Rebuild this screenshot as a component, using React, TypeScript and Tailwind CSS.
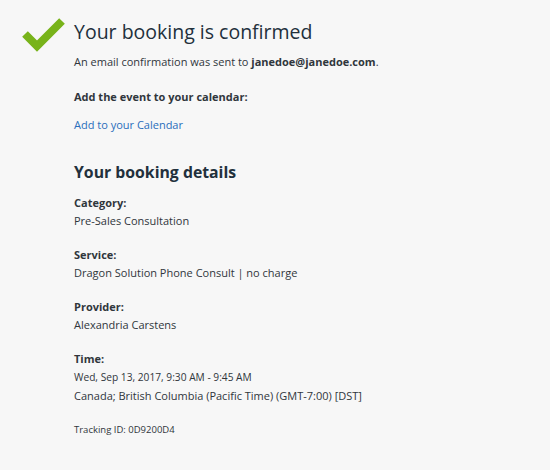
export default function App() {
  const details = [
    { label: "Category:", value: "Pre-Sales Consultation" },
    { label: "Service:", value: "Dragon Solution Phone Consult | no charge" },
    { label: "Provider:", value: "Alexandria Carstens" },
  ];

  return (
    <div className="min-h-[470px] w-[550px] bg-[#f7f7f7] text-[#30363c] font-['Open_Sans',sans-serif]">
      <div className="flex pt-[16px] pl-[22px]">
        {/* checkmark */}
        <svg width="44" height="36" viewBox="0 0 44 36" className="mt-[1px] shrink-0">
          <path d="M3 17 L15 29 L40 4" fill="none" stroke="#78b31a" strokeWidth="8" />
        </svg>
        <div className="ml-[8px]">
          <h1 className="text-[19.5px] leading-[32px] font-normal text-[#22303c]">
            Your booking is confirmed
          </h1>
          <p className="mt-[5px] text-[11px] leading-[18px]">
            An email confirmation was sent to <span className="font-bold">janedoe@janedoe.com</span>.
          </p>
          <p className="mt-[17px] text-[11px] leading-[18px] font-bold">
            Add the event to your calendar:
          </p>
          <a className="mt-[10px] block text-[11px] leading-[18px] text-[#2a6ebb]">
            Add to your Calendar
          </a>

          <h2 className="mt-[25px] text-[15.8px] leading-[26px] font-bold text-[#22303c]">
            Your booking details
          </h2>

          <div className="mt-[9px] flex flex-col gap-[16px]">
            {details.map((d) => (
              <div key={d.label} className="text-[11px] leading-[18px]">
                <p className="font-bold">{d.label}</p>
                <p>{d.value}</p>
              </div>
            ))}
            <div className="text-[11px] leading-[18px]">
              <p className="font-bold">Time:</p>
              <p className="text-[10.2px] leading-[19px]">Wed, Sep 13, 2017, 9:30 AM - 9:45 AM</p>
              <p>Canada; British Columbia (Pacific Time) (GMT-7:00) [DST]</p>
            </div>
          </div>

          <p className="mt-[18px] text-[9.5px] leading-[14px]">Tracking ID: 0D9200D4</p>
        </div>
      </div>
    </div>
  );
}
